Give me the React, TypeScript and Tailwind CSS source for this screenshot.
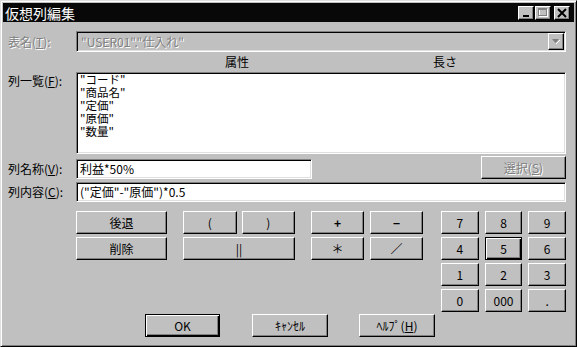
import React from 'react';

// Win95 風のベベル
const raised =
  'border border-t-white border-l-white border-r-black border-b-black shadow-[inset_-1px_-1px_0_#808080]';
const raisedDefault =
  'border border-black shadow-[inset_1px_1px_0_#fff,inset_-1px_-1px_0_#000,inset_-2px_-2px_0_#808080]';
const sunken =
  'border border-t-[#808080] border-l-[#808080] border-r-white border-b-white shadow-[inset_1px_1px_0_#000,inset_-1px_-1px_0_#dfdfdf]';

const Btn = ({
  children,
  className = '',
  isDefault = false,
  disabled = false,
}: {
  children: React.ReactNode;
  className?: string;
  isDefault?: boolean;
  disabled?: boolean;
}) => (
  <button
    type="button"
    className={`flex h-[23px] items-center justify-center bg-[#c0c0c0] text-[12px] leading-none ${
      isDefault ? raisedDefault : raised
    } ${disabled ? 'text-[#808080] [text-shadow:1px_1px_0_#fff]' : 'text-black'} ${className}`}
  >
    {children}
  </button>
);

const Key = ({ k }: { k: string }) => <span className="underline underline-offset-[1px]">{k}</span>;

const TitleButton = ({ children, className = '' }: { children: React.ReactNode; className?: string }) => (
  <div className={`flex h-[14px] w-[16px] items-center justify-center bg-[#c0c0c0] ${raised} ${className}`}>
    {children}
  </div>
);

const TitleBar = () => (
  <div className="flex h-[19px] items-center justify-between bg-[#080808] pl-[2px] pr-[4px]">
    <span className="text-[14px] leading-none text-white">仮想列編集</span>
    <div className="flex items-center">
      <TitleButton>
        <svg width="12" height="10" viewBox="0 0 12 10">
          <rect x="3" y="7" width="6" height="2" fill="#000" />
        </svg>
      </TitleButton>
      <TitleButton className="ml-[1px]">
        <svg width="12" height="10" viewBox="0 0 12 10">
          <rect x="2.5" y="1.5" width="8" height="7" fill="none" stroke="#fff" />
          <rect x="1.5" y="0.5" width="8" height="7" fill="none" stroke="#808080" />
          <line x1="1.5" y1="1.5" x2="9.5" y2="1.5" stroke="#808080" />
        </svg>
      </TitleButton>
      <TitleButton className="ml-[3px]">
        <svg width="12" height="10" viewBox="0 0 12 10">
          <path d="M2 1 L10 9 M10 1 L2 9" stroke="#000" strokeWidth="2" />
        </svg>
      </TitleButton>
    </div>
  </div>
);

const items = ['"コード"', '"商品名"', '"定価"', '"原価"', '"数量"'];

export default function App() {
  return (
    <div className="font-['Noto_Sans_CJK_JP',sans-serif] text-black">
      <div className="flex h-[347px] w-[577px] flex-col border border-t-[#dfdfdf] border-l-[#dfdfdf] border-r-black border-b-black bg-[#c0c0c0] p-[2px] shadow-[inset_1px_1px_0_#fff,inset_-1px_-1px_0_#808080]">
        <TitleBar />

        <div className="flex flex-col pl-[5px] pr-[8px]">
          {/* 表名 */}
          <div className="mt-[9px] flex h-[21px] items-center">
            <span className="w-[68px] text-[12px] leading-none text-[#808080] [text-shadow:1px_1px_0_#fff]">
              表名(<Key k="T" />):
            </span>
            <div className={`flex h-[21px] flex-1 items-center justify-between pl-[4px] pr-[1px] ${sunken}`}>
              <span className="text-[12px] leading-none text-[#808080] [text-shadow:1px_1px_0_#fff]">
                "USER01"."仕入れ"
              </span>
              <div className={`flex h-[17px] w-[16px] items-center justify-center bg-[#c0c0c0] ${raised}`}>
                <svg width="8" height="5" viewBox="0 0 8 5">
                  <path d="M0 0 H7 L3.5 4 Z" fill="#808080" />
                  <path d="M4 5 L8 1" stroke="#fff" strokeWidth="1" />
                </svg>
              </div>
            </div>
          </div>

          {/* 見出し */}
          <div className="ml-[68px] flex h-[20px] items-center text-[12px] leading-none">
            <span className="w-[322px] text-center">属性</span>
            <span className="w-[94px] text-center">長さ</span>
          </div>

          {/* 列一覧 */}
          <div className="flex">
            <span className="w-[68px] pt-[3px] text-[12px] leading-none">
              列一覧(<Key k="F" />):
            </span>
            <div className={`h-[82px] flex-1 bg-white pl-[3px] ${sunken}`}>
              <ul className="text-[11.5px] leading-[13px]">
                {items.map((it) => (
                  <li key={it} className="h-[13px]">
                    {it}
                  </li>
                ))}
              </ul>
            </div>
          </div>

          {/* 列名称 */}
          <div className="mt-[3px] flex h-[22px] items-end">
            <span className="flex h-[20px] w-[68px] items-center text-[12px] leading-none">
              列名称(<Key k="V" />):
            </span>
            <div className={`flex h-[20px] w-[236px] items-center bg-white pl-[3px] text-[12px] leading-none ${sunken}`}>
              利益*50%
            </div>
            <div className="flex-1" />
            <Btn disabled className="h-[22px] w-[85px]">
              選択(<Key k="S" />)
            </Btn>
          </div>

          {/* 列内容 */}
          <div className="mt-[3px] flex h-[20px] items-center">
            <span className="w-[68px] text-[12px] leading-none">
              列内容(<Key k="C" />):
            </span>
            <div className={`flex h-[20px] flex-1 items-center bg-white pl-[3px] text-[12px] leading-none ${sunken}`}>
              ("定価"-"原価")*0.5
            </div>
          </div>

          {/* キーパッド */}
          <div className="mt-[9px] ml-[68px] flex items-start">
            <div className="flex w-[91px] flex-col gap-[3px]">
              <Btn>後退</Btn>
              <Btn>削除</Btn>
            </div>
            <div className="ml-[16px] grid w-[112px] grid-cols-2 gap-x-[5px] gap-y-[3px]">
              <Btn>(</Btn>
              <Btn>)</Btn>
              <Btn className="col-span-2">||</Btn>
            </div>
            <div className="ml-[16px] grid w-[112px] grid-cols-2 gap-x-[6px] gap-y-[3px]">
              <Btn className="font-bold">+</Btn>
              <Btn className="font-bold">−</Btn>
              <Btn>＊</Btn>
              <Btn>／</Btn>
            </div>
            <div className="ml-[18px] grid w-[125px] grid-cols-3 gap-x-[6px] gap-y-[3px]">
              <Btn>7</Btn>
              <Btn>8</Btn>
              <Btn>9</Btn>
              <Btn>4</Btn>
              <Btn isDefault>5</Btn>
              <Btn>6</Btn>
              <Btn>1</Btn>
              <Btn>2</Btn>
              <Btn>3</Btn>
              <Btn>0</Btn>
              <Btn>000</Btn>
              <Btn>.</Btn>
            </div>
          </div>

          {/* OK / キャンセル / ヘルプ */}
          <div className="mt-[2px] ml-[137px] flex">
            <Btn isDefault className="w-[75px]">
              OK
            </Btn>
            <Btn className="ml-[32px] w-[76px]">ｷｬﾝｾﾙ</Btn>
            <Btn className="ml-[31px] w-[76px]">
              ﾍﾙﾌﾟ(<Key k="H" />)
            </Btn>
          </div>
        </div>
      </div>
    </div>
  );
}
